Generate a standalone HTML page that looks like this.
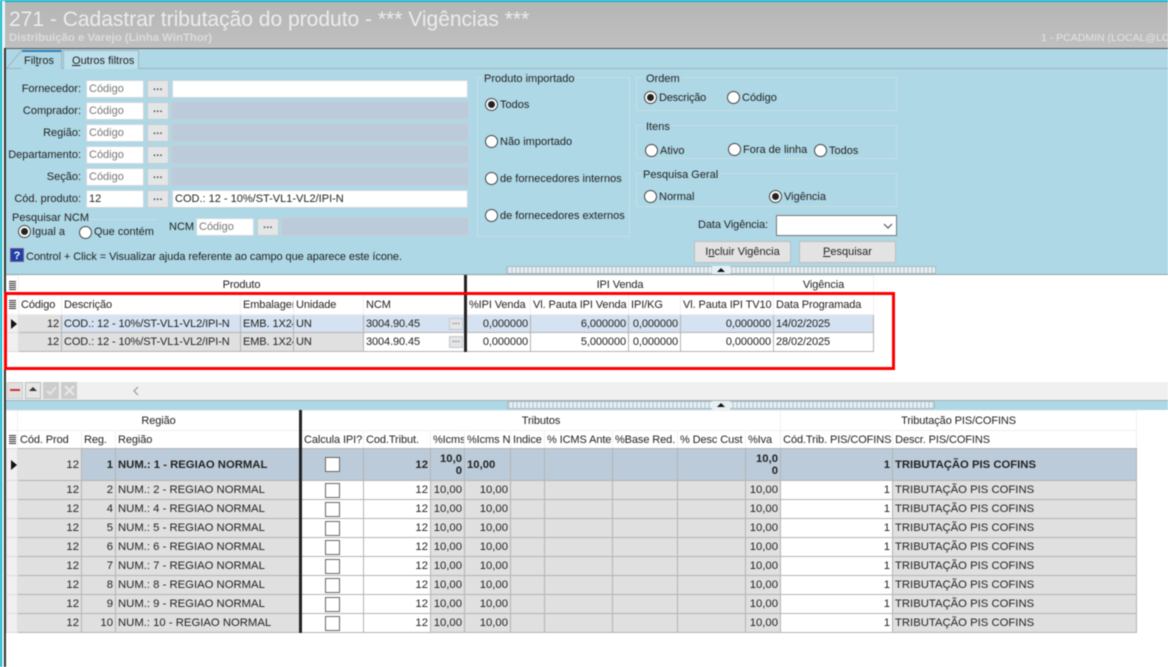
<!DOCTYPE html>
<html lang="pt-BR">
<head>
<meta charset="utf-8">
<title>271 - Cadastrar tributação do produto</title>
<style>
html,body{margin:0;padding:0;background:#fff}
#p{position:relative;width:1168px;height:667px;overflow:hidden;background:#fff;font:11px "Liberation Sans",sans-serif;color:#222;filter:blur(.42px)}
#p div,#p span.a{position:absolute;box-sizing:border-box;white-space:nowrap}
.l{line-height:14px;height:14px}
.r{text-align:right}
.in{background:#fff;border:1px solid #cfd8dc;height:18px;line-height:16px;padding-left:2px;color:#777}
.bt{background:#e3e5e6;border:1px solid #c4ccd0;width:22px;height:18px;text-align:center;line-height:14px;font-weight:bold;font-size:10px;color:#444;letter-spacing:.5px}
.ds{background:#bccbd9;border:1px solid #c5d0d9;height:19px}
.gb{border:1px solid #c5dde8}
.lg{background:#aed8e6;padding:0 2px;line-height:12px;height:13px}
.ra{width:13px;height:13px;border-radius:50%;background:#fff;border:1px solid #444}
.on::after{content:"";position:absolute;left:2px;top:2px;width:7px;height:7px;border-radius:50%;background:#222}
.b{background:#e3e3e3;border:1px solid #bdbdbd;text-align:center;line-height:21px;height:22px}
u{text-decoration:underline}
.sp{background:repeating-linear-gradient(90deg,#c6d6dc 0 2px,#eef3f5 2px 4px);border:1px solid #a9b9c0;border-radius:2px;height:8px}
.sb{background:#e8f0f4;width:18px;height:9px}
.sb::after{content:"";position:absolute;left:5px;top:2px;border:4px solid transparent;border-bottom:4px solid #111;border-top:0}
table{position:absolute;border-collapse:collapse;table-layout:fixed;font:11px "Liberation Sans",sans-serif;letter-spacing:-.1px;color:#222}
table.lo{font-size:11.3px;letter-spacing:0}
td{padding:0 2px;border:1px solid #b4b4b4;overflow:hidden;white-space:nowrap;box-sizing:border-box}
td.n{text-align:right}
.g{background:#e0e0e0}.w{background:#fff}.s{background:#bccbd9;font-weight:bold}.h{background:#fff;border-color:#f0f0f0}
.f{background:#d5e2f1;border-top:1px dotted #555;border-bottom:1px dotted #555}
.ic{background:#f0f0f0;border-color:#ddd}
td.tk{border-right:3px solid #222}
.wrap{line-height:12px;padding:0 2px;text-align:right}
.cb{display:block;width:13px;height:13px;border:1px solid #666;background:#fff;margin:0 auto}
.tri{display:block;width:0;height:0;border:5px solid transparent;border-left:6px solid #111;border-right:0;margin-left:2px}
.grip{display:block;width:7px;height:9px;margin:0 auto;background:repeating-linear-gradient(180deg,#333 0 1px,#fff 1px 2px)}
.eb{background:#e3e5e6;border:1px solid #c4c8cc;width:14px;height:12px;right:1px;top:3px;text-align:center;line-height:6px;font-size:10px;color:#444}
</style>
</head>
<body>
<div id="p">
<div style="left:0;top:0;width:1168px;height:48px;background:linear-gradient(180deg,#b5b5b5,#c0c0c0)"></div>
<div style="left:0;top:0;width:1168px;height:1.5px;background:#0fb5c8"></div>
<div style="left:2px;top:1px;width:3px;height:666px;background:#eaf6f8"></div>
<div style="left:0;top:0;width:2px;height:667px;background:#0fb5c8"></div>
<div style="left:9px;top:8px;font-size:21px;line-height:24px;color:#ececec">271 - Cadastrar tributação do produto - *** Vigências ***</div>
<div style="left:9px;top:31px;font-size:11.4px;font-weight:bold;line-height:14px;color:#dcdcdc">Distribuição e Varejo (Linha WinThor)</div>
<div style="left:1041px;top:31px;font-size:10.5px;line-height:14px;color:#e4e4e4">1 - PCADMIN (LOCAL@LOCAL)</div>

<div style="left:4px;top:48px;width:1164px;height:227px;background:#aed8e6;border-top:1px solid #555"></div>
<div style="left:4px;top:48px;width:2px;height:619px;background:#333"></div>
<div style="left:6px;top:68px;width:1162px;height:1px;background:#9fb4bd"></div>
<svg style="position:absolute;left:6px;top:50px" width="17" height="19"><path d="M0 19 L16 0" fill="none" stroke="#9fb4bd"/></svg>
<div style="left:22px;top:50px;width:40px;height:19px;background:#aed8e6;border-top:2px solid #2f7fb5;border-right:1px solid #9fb4bd"></div>
<div style="left:24px;top:54px;line-height:14px">Fil<u>t</u>ros</div>
<div style="left:63px;top:50px;width:76px;height:19px;background:#bde0ec;border:1px solid #9fb4bd;border-bottom:0"></div>
<div style="left:72px;top:54px;line-height:14px"><u>O</u>utros filtros</div>

<div class="l r" style="left:0;width:81px;top:82px">Fornecedor:</div>
<div class="l r" style="left:0;width:81px;top:104px">Comprador:</div>
<div class="l r" style="left:0;width:81px;top:126px">Região:</div>
<div class="l r" style="left:0;width:81px;top:148px">Departamento:</div>
<div class="l r" style="left:0;width:81px;top:170px">Seção:</div>
<div class="l r" style="left:0;width:81px;top:192px">Cód. produto:</div>

<div class="in" style="left:86px;top:80px;width:58px">Código</div><div class="bt" style="left:147px;top:80px">...</div>
<div class="in" style="left:172px;top:80px;width:296px"></div>
<div class="in" style="left:86px;top:102px;width:58px">Código</div><div class="bt" style="left:147px;top:102px">...</div>
<div class="ds" style="left:171px;top:101px;width:298px"></div>
<div class="in" style="left:86px;top:124px;width:58px">Código</div><div class="bt" style="left:147px;top:124px">...</div>
<div class="ds" style="left:171px;top:123px;width:298px"></div>
<div class="in" style="left:86px;top:146px;width:58px">Código</div><div class="bt" style="left:147px;top:146px">...</div>
<div class="ds" style="left:171px;top:145px;width:298px"></div>
<div class="in" style="left:86px;top:168px;width:58px">Código</div><div class="bt" style="left:147px;top:168px">...</div>
<div class="ds" style="left:171px;top:167px;width:298px"></div>
<div class="in" style="left:86px;top:190px;width:58px;color:#222">12</div><div class="bt" style="left:147px;top:190px">...</div>
<div class="in" style="left:172px;top:190px;width:296px;color:#222">COD.: 12 - 10%/ST-VL1-VL2/IPI-N</div>

<div style="left:84px;top:219px;width:74px;height:1px;background:#c5dde8"></div>
<div class="l" style="left:12px;top:211px">Pesquisar NCM</div>
<div class="ra on" style="left:18px;top:225px"></div><div class="l" style="left:32px;top:225px">Igual a</div>
<div class="ra" style="left:79px;top:226px"></div><div class="l" style="left:94px;top:225px">Que contém</div>
<div class="l" style="left:169px;top:220px">NCM</div>
<div class="in" style="left:196px;top:218px;width:58px">Código</div><div class="bt" style="left:257px;top:218px">...</div>
<div class="ds" style="left:281px;top:217px;width:188px"></div>
<svg style="position:absolute;left:10px;top:248px" width="14" height="14"><rect width="14" height="14" fill="#1c3fa8"/><rect x=".5" y=".5" width="13" height="13" fill="none" stroke="#7a5a90"/><text x="7" y="11" font-family="Liberation Sans" font-weight="bold" font-size="11" fill="#fff" text-anchor="middle">?</text></svg>
<div class="l" style="left:26px;top:250px;letter-spacing:-.07px">Control + Click = Visualizar ajuda referente ao campo que aparece este ícone.</div>

<div class="gb" style="left:477px;top:77px;width:153px;height:160px"></div>
<div class="lg" style="left:482px;top:73px">Produto importado</div>
<div class="ra on" style="left:485px;top:98px"></div><div class="l" style="left:500px;top:98px">Todos</div>
<div class="ra" style="left:485px;top:135px"></div><div class="l" style="left:500px;top:135px">Não importado</div>
<div class="ra" style="left:485px;top:172px"></div><div class="l" style="left:500px;top:172px">de fornecedores internos</div>
<div class="ra" style="left:485px;top:209px"></div><div class="l" style="left:500px;top:209px">de fornecedores externos</div>

<div class="gb" style="left:636px;top:77px;width:261px;height:34px"></div>
<div class="lg" style="left:644px;top:73px">Ordem</div>
<div class="ra on" style="left:644px;top:91px"></div><div class="l" style="left:659px;top:91px;letter-spacing:-.2px">Descrição</div>
<div class="ra" style="left:727px;top:91px"></div><div class="l" style="left:742px;top:91px">Código</div>

<div class="gb" style="left:636px;top:125px;width:261px;height:34px"></div>
<div class="lg" style="left:644px;top:121px">Itens</div>
<div class="ra" style="left:645px;top:144px"></div><div class="l" style="left:660px;top:144px">Ativo</div>
<div class="ra" style="left:728px;top:143px"></div><div class="l" style="left:743px;top:143px">Fora de linha</div>
<div class="ra" style="left:814px;top:144px"></div><div class="l" style="left:829px;top:144px">Todos</div>

<div class="gb" style="left:636px;top:173px;width:261px;height:34px"></div>
<div class="lg" style="left:641px;top:169px">Pesquisa Geral</div>
<div class="ra" style="left:644px;top:190px"></div><div class="l" style="left:659px;top:190px">Normal</div>
<div class="ra on" style="left:769px;top:190px"></div><div class="l" style="left:784px;top:190px">Vigência</div>

<div class="l" style="left:698px;top:218px;letter-spacing:-.1px">Data Vigência:</div>
<div style="left:776px;top:215px;width:121px;height:21px;background:#fff;border:1px solid #777"></div>
<svg style="position:absolute;left:883px;top:222px" width="10" height="8"><path d="M1 2 L5 6 L9 2" fill="none" stroke="#555" stroke-width="1.2"/></svg>
<div class="b" style="left:694px;top:241px;width:97px">I<u>n</u>cluir Vigência</div>
<div class="b" style="left:799px;top:241px;width:97px"><u>P</u>esquisar</div>
<div class="sp" style="left:506px;top:266px;width:430px"></div>
<div class="sb" style="left:712px;top:266px"></div>
<div style="left:6px;top:274px;width:1162px;height:1px;background:#8fa3ab"></div>

<table style="left:6px;top:275px;width:867px">
<colgroup><col style="width:12px"><col style="width:43px"><col style="width:179px"><col style="width:53px"><col style="width:70px"><col style="width:102px"><col style="width:65px"><col style="width:98px"><col style="width:52px"><col style="width:93px"><col style="width:100px"></colgroup>
<tr style="height:19px"><td class="h"><span class="grip"></span></td><td class="h tk" colspan="5" style="text-align:center;border-top:0">Produto</td><td class="h" colspan="4" style="text-align:center">IPI Venda</td><td class="h" style="text-align:center">Vigência</td></tr>
<tr style="height:20px"><td class="h"><span class="grip"></span></td><td class="h">Código</td><td class="h">Descrição</td><td class="h">Embalagem</td><td class="h">Unidade</td><td class="h tk">NCM</td><td class="h">%IPI Venda</td><td class="h">Vl. Pauta IPI Venda</td><td class="h">IPI/KG</td><td class="h">Vl. Pauta IPI TV10</td><td class="h">Data Programada</td></tr>
<tr style="height:18px"><td class="ic"><span class="tri"></span></td><td class="g n" style="border-top:1px dotted #555;border-bottom:1px dotted #555">12</td><td class="f">COD.: 12 - 10%/ST-VL1-VL2/IPI-N</td><td class="f">EMB. 1X24</td><td class="f">UN</td><td class="f tk" style="position:relative">3004.90.45<span class="a eb">...</span></td><td class="f n">0,000000</td><td class="f n">6,000000</td><td class="f n">0,000000</td><td class="f n">0,000000</td><td class="f">14/02/2025</td></tr>
<tr style="height:19px"><td class="ic"></td><td class="g n">12</td><td class="g">COD.: 12 - 10%/ST-VL1-VL2/IPI-N</td><td class="g">EMB. 1X24</td><td class="g">UN</td><td class="w tk" style="position:relative">3004.90.45<span class="a eb">...</span></td><td class="w n">0,000000</td><td class="w n">5,000000</td><td class="w n">0,000000</td><td class="w n">0,000000</td><td class="w">28/02/2025</td></tr>
</table>

<div style="left:4px;top:292px;width:891px;height:78px;border:3px solid #f00"></div>

<div style="left:6px;top:382px;width:1162px;height:18px;background:#f0f0f0"></div>
<div style="left:7px;top:382px;width:16px;height:17px;background:#e0e0e0;border:1px solid #ccc"></div>
<div style="left:10px;top:389px;width:10px;height:2px;background:#d03030"></div>
<div style="left:25px;top:382px;width:16px;height:17px;background:#e6e6e6;border:1px solid #bbb"></div>
<div style="left:29px;top:387px;width:0;height:0;border:4px solid transparent;border-bottom:4px solid #333;border-top:0"></div>
<div style="left:43px;top:382px;width:16px;height:17px;background:#ccc"></div>
<svg style="position:absolute;left:46px;top:385px" width="11" height="11"><path d="M1 6 L4 9 L10 2" fill="none" stroke="#e4e4e4" stroke-width="2"/></svg>
<div style="left:61px;top:382px;width:16px;height:17px;background:#ccc"></div>
<svg style="position:absolute;left:64px;top:385px" width="11" height="11"><path d="M1 1 L10 10 M10 1 L1 10" fill="none" stroke="#e8e8e8" stroke-width="2"/></svg>
<svg style="position:absolute;left:132px;top:386px" width="8" height="10"><path d="M6 1 L2 5 L6 9" fill="none" stroke="#aaa" stroke-width="1.5"/></svg>
<div style="left:6px;top:400px;width:1162px;height:10px;background:#aed8e6;border-top:1px solid #9fb0b6"></div>
<div class="sp" style="left:507px;top:401px;width:428px"></div>
<div class="sb" style="left:712px;top:401px"></div>

<table style="left:6px;top:410px;width:1130px">
<colgroup><col style="width:11px"><col style="width:64px"><col style="width:34px"><col style="width:185px"><col style="width:63px"><col style="width:67px"><col style="width:34px"><col style="width:46px"><col style="width:34px"><col style="width:68px"><col style="width:65px"><col style="width:68px"><col style="width:35px"><col style="width:112px"><col style="width:244px"></colgroup>
<tr style="height:20px"><td class="h"></td><td class="h tk" colspan="3" style="text-align:center">Região</td><td class="h" colspan="9" style="text-align:center">Tributos</td><td class="h" colspan="2" style="text-align:center">Tributação PIS/COFINS</td></tr>
<tr style="height:18px"><td class="h"><span class="grip"></span></td><td class="h">Cód. Prod</td><td class="h">Reg.</td><td class="h tk">Região</td><td class="h">Calcula IPI?</td><td class="h">Cod.Tribut.</td><td class="h">%Icms</td><td class="h">%Icms N</td><td class="h">Indice</td><td class="h">% ICMS Ante</td><td class="h">%Base Red.</td><td class="h">% Desc Cust</td><td class="h">%Iva</td><td class="h">Cód.Trib. PIS/COFINS</td><td class="h">Descr. PIS/COFINS</td></tr>
</table>

<table class="lo" style="left:6px;top:448px;width:1130px">
<colgroup><col style="width:11px"><col style="width:64px"><col style="width:34px"><col style="width:185px"><col style="width:63px"><col style="width:67px"><col style="width:34px"><col style="width:46px"><col style="width:34px"><col style="width:68px"><col style="width:65px"><col style="width:68px"><col style="width:35px"><col style="width:112px"><col style="width:244px"></colgroup>
<tr style="height:32px"><td class="ic"><span class="tri"></span></td><td class="g n">12</td><td class="s n">1</td><td class="s tk">NUM.: 1 - REGIAO NORMAL</td><td class="s"><span class="cb"></span></td><td class="s n">12</td><td class="s wrap">10,0<br>0</td><td class="s">10,00</td><td class="s"></td><td class="s"></td><td class="s"></td><td class="s"></td><td class="s wrap">10,0<br>0</td><td class="s n">1</td><td class="s">TRIBUTAÇÃO PIS COFINS</td></tr>
<tr style="height:19px"><td class="ic"></td><td class="g n">12</td><td class="g n">2</td><td class="g tk">NUM.: 2 - REGIAO NORMAL</td><td class="w"><span class="cb"></span></td><td class="w n">12</td><td class="g n">10,00</td><td class="g n">10,00</td><td class="g"></td><td class="g"></td><td class="g"></td><td class="g"></td><td class="g n">10,00</td><td class="w n">1</td><td class="g">TRIBUTAÇÃO PIS COFINS</td></tr>
<tr style="height:19px"><td class="ic"></td><td class="g n">12</td><td class="g n">4</td><td class="g tk">NUM.: 4 - REGIAO NORMAL</td><td class="w"><span class="cb"></span></td><td class="w n">12</td><td class="g n">10,00</td><td class="g n">10,00</td><td class="g"></td><td class="g"></td><td class="g"></td><td class="g"></td><td class="g n">10,00</td><td class="w n">1</td><td class="g">TRIBUTAÇÃO PIS COFINS</td></tr>
<tr style="height:19px"><td class="ic"></td><td class="g n">12</td><td class="g n">5</td><td class="g tk">NUM.: 5 - REGIAO NORMAL</td><td class="w"><span class="cb"></span></td><td class="w n">12</td><td class="g n">10,00</td><td class="g n">10,00</td><td class="g"></td><td class="g"></td><td class="g"></td><td class="g"></td><td class="g n">10,00</td><td class="w n">1</td><td class="g">TRIBUTAÇÃO PIS COFINS</td></tr>
<tr style="height:19px"><td class="ic"></td><td class="g n">12</td><td class="g n">6</td><td class="g tk">NUM.: 6 - REGIAO NORMAL</td><td class="w"><span class="cb"></span></td><td class="w n">12</td><td class="g n">10,00</td><td class="g n">10,00</td><td class="g"></td><td class="g"></td><td class="g"></td><td class="g"></td><td class="g n">10,00</td><td class="w n">1</td><td class="g">TRIBUTAÇÃO PIS COFINS</td></tr>
<tr style="height:19px"><td class="ic"></td><td class="g n">12</td><td class="g n">7</td><td class="g tk">NUM.: 7 - REGIAO NORMAL</td><td class="w"><span class="cb"></span></td><td class="w n">12</td><td class="g n">10,00</td><td class="g n">10,00</td><td class="g"></td><td class="g"></td><td class="g"></td><td class="g"></td><td class="g n">10,00</td><td class="w n">1</td><td class="g">TRIBUTAÇÃO PIS COFINS</td></tr>
<tr style="height:19px"><td class="ic"></td><td class="g n">12</td><td class="g n">8</td><td class="g tk">NUM.: 8 - REGIAO NORMAL</td><td class="w"><span class="cb"></span></td><td class="w n">12</td><td class="g n">10,00</td><td class="g n">10,00</td><td class="g"></td><td class="g"></td><td class="g"></td><td class="g"></td><td class="g n">10,00</td><td class="w n">1</td><td class="g">TRIBUTAÇÃO PIS COFINS</td></tr>
<tr style="height:19px"><td class="ic"></td><td class="g n">12</td><td class="g n">9</td><td class="g tk">NUM.: 9 - REGIAO NORMAL</td><td class="w"><span class="cb"></span></td><td class="w n">12</td><td class="g n">10,00</td><td class="g n">10,00</td><td class="g"></td><td class="g"></td><td class="g"></td><td class="g"></td><td class="g n">10,00</td><td class="w n">1</td><td class="g">TRIBUTAÇÃO PIS COFINS</td></tr>
<tr style="height:19px"><td class="ic"></td><td class="g n">12</td><td class="g n">10</td><td class="g tk">NUM.: 10 - REGIAO NORMAL</td><td class="w"><span class="cb"></span></td><td class="w n">12</td><td class="g n">10,00</td><td class="g n">10,00</td><td class="g"></td><td class="g"></td><td class="g"></td><td class="g"></td><td class="g n">10,00</td><td class="w n">1</td><td class="g">TRIBUTAÇÃO PIS COFINS</td></tr>
</table>
</div>
</body>
</html>
